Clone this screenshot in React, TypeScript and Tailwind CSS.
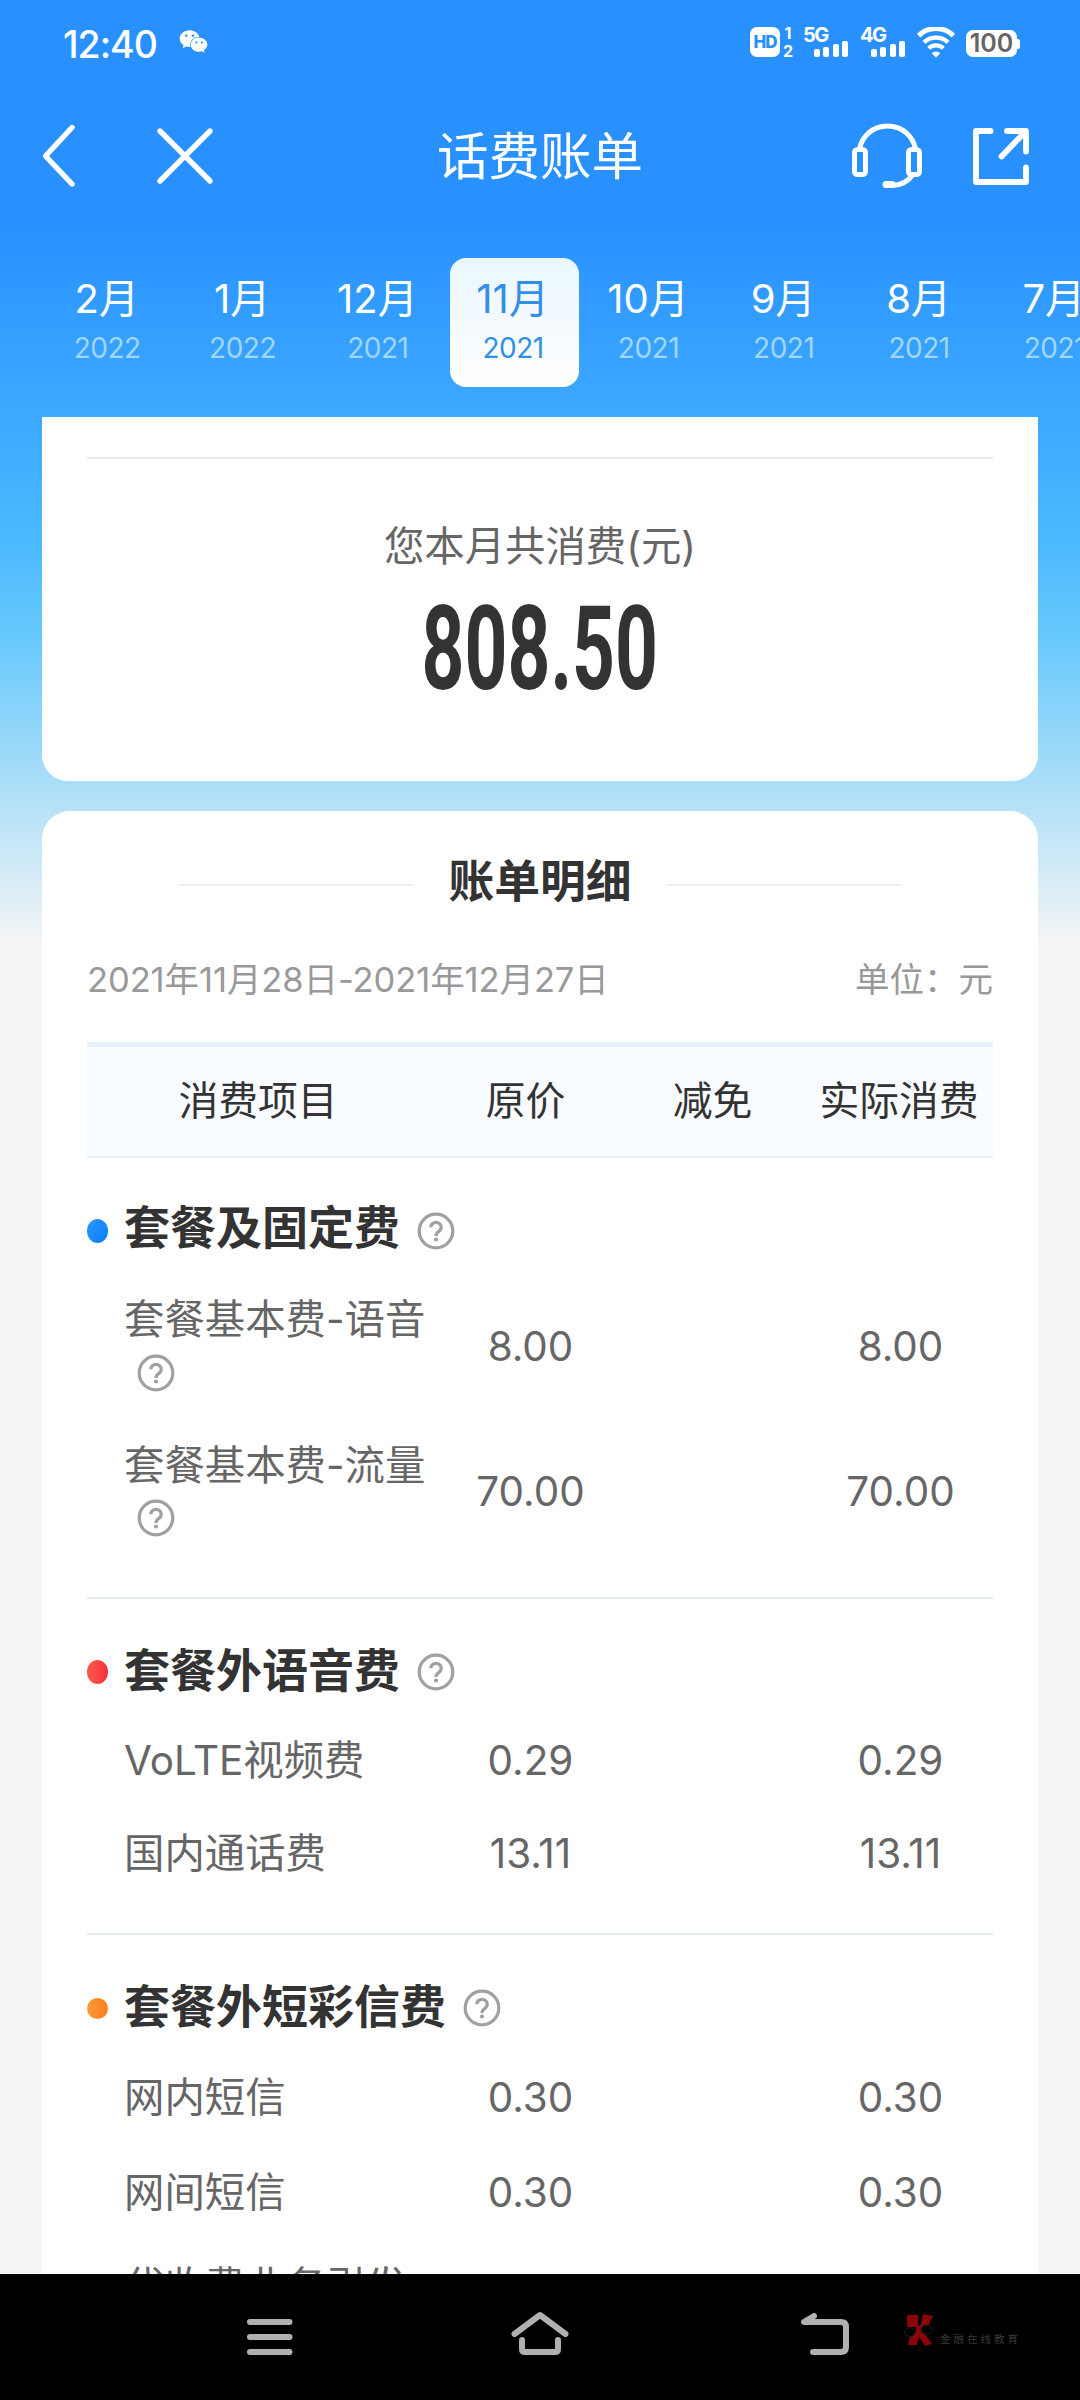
import React from "react";
import { FaWeixin } from "react-icons/fa";

type Month = { month: string; year: string; active?: boolean };
type Item = { name: string; price: string; actual: string; help?: boolean; height: string };
type Section = { title: string; titleShift: string; dot: string; dotSize: string; items: Item[]; end: string };

const months: Month[] = [
  { month: "2月", year: "2022" },
  { month: "1月", year: "2022" },
  { month: "12月", year: "2021" },
  { month: "11月", year: "2021", active: true },
  { month: "10月", year: "2021" },
  { month: "9月", year: "2021" },
  { month: "8月", year: "2021" },
  { month: "7月", year: "2021" },
];

const sections: Section[] = [
  {
    title: "套餐及固定费",
    titleShift: "-mt-[9px]",
    dot: "bg-linear-to-br from-[#2a97ff] to-[#087cf8]",
    dotSize: "h-6",
    end: "h-9",
    items: [
      { name: "套餐基本费-语音", price: "8.00", actual: "8.00", help: true, height: "h-[148px] pb-[2px]" },
      { name: "套餐基本费-流量", price: "70.00", actual: "70.00", help: true, height: "h-[140px] pt-[1px]" },
    ],
  },
  {
    title: "套餐外语音费",
    titleShift: "-mt-[4px]",
    dot: "bg-linear-to-r from-[#ff5a50] to-[#f92c38]",
    dotSize: "h-6",
    end: "h-[33px]",
    items: [
      { name: "VoLTE视频费", price: "0.29", actual: "0.29", height: "h-[93px]" },
      { name: "国内通话费", price: "13.11", actual: "13.11", height: "h-[93px]" },
    ],
  },
  {
    title: "套餐外短彩信费",
    titleShift: "-mt-[4px]",
    dot: "bg-linear-to-r from-[#f79a38] to-[#f97f18]",
    dotSize: "h-[21px]",
    end: "h-9",
    items: [
      { name: "网内短信", price: "0.30", actual: "0.30", height: "h-[94px]" },
      { name: "网间短信", price: "0.30", actual: "0.30", height: "h-[96px]" },
      { name: "代收费业务引发", price: "", actual: "", height: "h-[93px]" },
    ],
  },
];

function HelpIcon() {
  return (
    <svg width="38" height="38" viewBox="0 0 38 38" fill="none" stroke="#a0a0a0" strokeWidth="3.2" className="shrink-0">
      <circle cx="19" cy="19" r="16.800" />
      <path d="M13.8 15.2a5.2 4.9 0 1 1 8.4 3.9c-2 1.500-3.200 2.100-3.200 4.900" />
      <circle cx="19" cy="27.500" r="2.100" fill="#a0a0a0" stroke="none" />
    </svg>
  );
}

function SignalBars({ label }: { label: string }) {
  return (
    <div className="relative h-[30px] w-[45px]">
      <span className="absolute -top-px left-0 text-[20px] leading-[18px] font-bold tracking-[-1.5px]">{label}</span>
      <div className="flex h-full items-end justify-end gap-[3.5px]">
        <i className="h-2 w-[6px] rounded-[2px] bg-white" />
        <i className="h-[10px] w-[6px] rounded-[2px] bg-white" />
        <i className="h-[13px] w-[6px] rounded-[2px] bg-white" />
        <i className="h-[16px] w-[6px] rounded-[2px] bg-white" />
      </div>
    </div>
  );
}

function StatusBar() {
  return (
    <div className="flex h-[88px] items-start pl-[63px] pr-[60px] pt-[27px]">
      <span className="w-[116px] text-[37.5px] leading-[36px] font-medium tracking-[-1px]">12:40</span>
      <FaWeixin className="h-[29px] w-[29px]" />
      <div className="ml-auto flex items-start">
        <div className="flex h-[30px] w-[30px] items-center justify-center rounded-[7px] bg-white">
          <span className="text-[17px] leading-none font-extrabold tracking-[-1px] text-[#2891ff]">HD</span>
        </div>
        <div className="ml-[3px] flex h-[30px] w-[10px] flex-col items-center justify-between text-[16px] font-bold">
          <span className="leading-[12px]">1</span>
          <span className="leading-[12px]">2</span>
        </div>
        <div className="ml-[10px]">
          <SignalBars label="5G" />
        </div>
        <div className="ml-[12px]">
          <SignalBars label="4G" />
        </div>
        <svg width="38" height="31" viewBox="0 0 38 31" fill="none" stroke="#fff" className="ml-[12px]">
          <path d="M1.600 8.600a25 25 0 0 1 34.800 0" strokeWidth="5" />
          <path d="M7 15.400a17.600 17.600 0 0 1 24 0" strokeWidth="4.4" />
          <path d="M11.600 21.200a11 11 0 0 1 14.800 0" strokeWidth="4.2" />
          <path d="M14.600 26.200a6.500 6.500 0 0 1 8.800 0L19 30.400z" fill="#fff" stroke="none" />
        </svg>
        <div className="mt-[3px] ml-[11px] flex items-center">
          <div className="flex h-[27px] w-[51px] items-center justify-center rounded-[7px] bg-white">
            <span className="text-[25px] leading-none font-semibold text-[#666]">100</span>
          </div>
          <i className="h-[10px] w-[3px] rounded-r-[2px] bg-white" />
        </div>
      </div>
    </div>
  );
}

function NavBar() {
  return (
    <div className="grid h-[136px] grid-cols-[1fr_auto_1fr] items-center">
      <div className="flex items-center pl-[40px]">
        <svg width="36" height="66" viewBox="0 0 36 66" fill="none" stroke="#fff" strokeWidth="5.4" strokeLinecap="round" strokeLinejoin="round">
          <path d="M32 4.500 5.500 33 32 61" />
        </svg>
        <svg width="56" height="56" viewBox="0 0 56 56" fill="none" stroke="#fff" strokeWidth="5.4" strokeLinecap="round" className="ml-[81px]">
          <path d="M3 3 53 53M53 3 3 53" />
        </svg>
      </div>
      <h1 className="text-[51.500px] leading-[60px] font-normal">话费账单</h1>
      <div className="flex items-center justify-end pr-[50px]">
        <svg width="70" height="66" viewBox="0 0 70 66" fill="none" stroke="#fff" strokeWidth="5" strokeLinejoin="round" strokeLinecap="round">
          <rect x="2.500" y="26.500" width="11" height="25" rx="3" />
          <rect x="56.500" y="26.500" width="11" height="25" rx="3" />
          <path d="M7.500 26C10 13 21 3 35.500 3S61 13 63.500 26" />
          <path d="M61 51.500C56 58.500 48.500 62.500 40 62.500" />
          <path d="M34 61.500h6" strokeWidth="7" />
        </svg>
        <svg width="58" height="58" viewBox="0 0 58 58" fill="none" stroke="#fff" strokeWidth="5.8" strokeLinecap="round" strokeLinejoin="round" className="ml-[50px]">
          <path d="M18.500 4H4v51h50V40.500" />
          <path d="M35 4h19v20.500M52 6 29.500 29.500" />
        </svg>
      </div>
    </div>
  );
}

function MonthTabs() {
  return (
    <div className="flex h-[193px] pl-[40.6px] pt-[34px]">
      {months.map((m, i) => (
        <div key={i} className="flex w-[135.3px] shrink-0 justify-center">
          <div
            className={
              m.active
                ? "flex h-[129px] w-[129px] flex-col items-center rounded-[16px] bg-linear-to-b from-[#eaf6ff] to-white pt-[17px] text-[#338fe6]"
                : "flex h-[129px] w-[129px] flex-col items-center pt-[17px] text-white"
            }
          >
            <span className="-ml-[3px] text-[40px] leading-[48px]">{m.month}</span>
            <span
              className={
                m.active
                  ? "mt-[8px] -ml-[2px] text-[28px] leading-[34px] tracking-[-0.5px]"
                  : "mt-[8px] -ml-[2px] text-[28px] leading-[34px] tracking-[-0.5px] text-[#a0d6ff]"
              }
            >
              {m.year}
            </span>
          </div>
        </div>
      ))}
    </div>
  );
}

function SummaryCard() {
  return (
    <div className="mx-[42px] flex h-[364px] shrink-0 flex-col items-center rounded-b-[26px] bg-white px-[45px] pt-[40px]">
      <div className="h-[2px] w-full bg-[#ebebeb]" />
      <p className="mt-[64px] text-[40.4px] leading-[48px] text-[#666]">您本月共消费(元)</p>
      <div className="mt-[23px] flex h-[110px] w-[240px] items-center justify-center">
        <span className="origin-center scale-x-[0.64] font-['Roboto'] text-[117px] leading-none font-bold text-[#333]">808.50</span>
      </div>
    </div>
  );
}

function BillRow({ item }: { item: Item }) {
  return (
    <div className={`grid grid-cols-[346px_187px_187px_186px] items-center text-[40.4px] leading-[53px] text-[#666] ${item.height}`}>
      <div className="flex flex-col pl-[37px]">
        <span className="whitespace-nowrap">{item.name}</span>
        {item.help && (
          <span className="flex h-[53px] items-center pl-[13px]">
            <HelpIcon />
          </span>
        )}
      </div>
      <span className="pl-[8px] text-center">{item.price}</span>
      <span />
      <span className="pl-px text-center">{item.actual}</span>
    </div>
  );
}

function BillSection({ section, last }: { section: Section; last: boolean }) {
  return (
    <section className="pt-[46px]">
      <div className="mb-[15px] flex h-[54px] items-center">
        <i className={`w-[21px] rounded-[50%] ${section.dotSize} ${section.dot}`} />
        <h3 className={`ml-[16px] mr-[17px] text-[46px] leading-[54px] font-bold text-[#333] ${section.titleShift}`}>{section.title}</h3>
        <HelpIcon />
      </div>
      {section.items.map((item) => (
        <BillRow key={item.name} item={item} />
      ))}
      <div className={section.end} />
      {!last && <div className="h-[2px] bg-[#e3ebf1]" />}
    </section>
  );
}

function DetailCard() {
  return (
    <div className="mx-[42px] mt-[30px] h-[1463px] shrink-0 overflow-hidden rounded-t-[28px] bg-white px-[45px] pt-[41px]">
      <div className="flex h-[60px] items-center justify-center">
        <i className="mt-[5px] h-[2px] w-[236px] bg-[#f1f1f1]" />
        <h2 className="w-[252px] text-center text-[45.800px] leading-[60px] font-bold text-[#333]">账单明细</h2>
        <i className="mt-[5px] h-[2px] w-[236px] bg-[#f1f1f1]" />
      </div>
      <div className="mt-[43px] flex h-[50px] items-center justify-between text-[34.5px] leading-[50px] text-[#999]">
        <span className="tracking-[-0.08px]">2021年11月28日-2021年12月27日</span>
        <span>单位：元</span>
      </div>
      <div className="mt-[37px] grid h-[116px] grid-cols-[346px_187px_187px_186px] items-center border-t-[5px] border-b-[2px] border-t-[#e3f2fc] border-b-[#e6eff6] bg-[#f8fbff] pb-[2px] text-center text-[39.8px] text-[#333]">
        <span className="-ml-[4px]">消费项目</span>
        <span className="-ml-[2px]">原价</span>
        <span className="-ml-[2px]">减免</span>
        <span className="-ml-[2px]">实际消费</span>
      </div>
      {sections.map((s, i) => (
        <BillSection key={s.title} section={s} last={i === sections.length - 1} />
      ))}
    </div>
  );
}

function SystemNav() {
  return (
    <div className="flex h-[126px] shrink-0 items-start bg-black pt-[36px]">
      <svg width="56" height="48" viewBox="0 0 56 48" fill="none" stroke="#b0b0b0" strokeWidth="6" strokeLinecap="round" className="ml-[242px]">
        <path d="M8 12h39.500M8 27h39.500M8 42h39.500" />
      </svg>
      <svg width="64" height="48" viewBox="0 0 64 48" fill="none" stroke="#b0b0b0" strokeWidth="6" strokeLinecap="round" strokeLinejoin="round" className="ml-[210px]">
        <path d="M6.500 24 32 5l25.500 19" />
        <path d="M14 30v9q0 3 3 3h30q3 0 3-3v-9" />
      </svg>
      <svg width="54" height="48" viewBox="0 0 54 48" fill="none" stroke="#b0b0b0" strokeWidth="6" strokeLinecap="round" strokeLinejoin="round" className="ml-[228px]">
        <path d="M14 6 4 12h37q5 0 5 5v20q0 5-5 5H13" />
      </svg>
      <div className="ml-[50px] flex items-start pt-[3px]">
        <svg width="30" height="34" viewBox="0 0 30 34">
          <path d="M3 2h11v12H3zM19 1l10 2-5 10-8 1zM12 13h5l1 4 10 14-7 2-6-9-2 8H4l2-8 6-5z" fill="#8a0508" />
          <path d="M1 19q0-4 5-4t5 3q0 5-5 5.500-5 0-5-4.500M17 15q2-3 6-3t5 4-5 5-6-6" fill="#000" stroke="#1d1d1d" />
        </svg>
        <span className="mt-[17px] ml-[6px] text-[10.5px] leading-[20px] tracking-[3px] whitespace-nowrap text-[#3a3a3a]">金融在线教育</span>
      </div>
    </div>
  );
}

export default function App() {
  return (
    <div className="flex h-[2400px] w-[1080px] flex-col overflow-hidden bg-[#f5f5f5] bg-[linear-gradient(180deg,#2891ff_0px,#2891ff_220px,#3fabff_430px,#4bb9ff_540px,#68c9fc_640px,#addff8_790px,#f5f5f5_945px)] font-['Inter','Noto_Sans_CJK_SC',sans-serif] text-white">
      <StatusBar />
      <NavBar />
      <MonthTabs />
      <SummaryCard />
      <DetailCard />
      <SystemNav />
    </div>
  );
}
